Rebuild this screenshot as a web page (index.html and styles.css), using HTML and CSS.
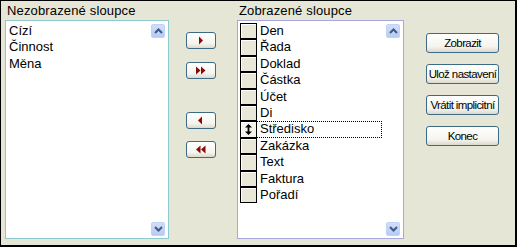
FILE: index.html
```html
<!DOCTYPE html>
<html>
<head>
<meta charset="utf-8">
<link rel="stylesheet" href="styles.css">
</head>
<body>
<div class="window">
  <div class="col col-left">
    <div class="label">Nezobrazené sloupce</div>
    <div class="listbox listbox-teal">
      <div class="items plain">
        <div class="item">Cízí</div>
        <div class="item">Činnost</div>
        <div class="item">Měna</div>
      </div>
      <div class="scrollbar">
        <div class="sbtn"><svg width="9" height="6" viewBox="0 0 9 6"><polyline points="1,5 4.5,1.5 8,5" fill="none" stroke="#3f5a86" stroke-width="2"/></svg></div>
        <div class="sbtn"><svg width="9" height="6" viewBox="0 0 9 6"><polyline points="1,1 4.5,4.5 8,1" fill="none" stroke="#3f5a86" stroke-width="2"/></svg></div>
      </div>
    </div>
  </div>

  <div class="mid">
    <div class="xbtn b1"><svg width="12" height="9" viewBox="0 0 12 9"><polygon points="4,0.5 8,4.5 4,8.5" fill="#8b0a0a"/></svg></div>
    <div class="xbtn b2"><svg width="12" height="9" viewBox="0 0 12 9"><polygon points="1,0.5 5.5,4.5 1,8.5" fill="#8b0a0a"/><polygon points="6,0.5 10.5,4.5 6,8.5" fill="#8b0a0a"/></svg></div>
    <div class="xbtn b3"><svg width="12" height="9" viewBox="0 0 12 9"><polygon points="7,0.5 3,4.5 7,8.5" fill="#8b0a0a"/></svg></div>
    <div class="xbtn b4"><svg width="12" height="9" viewBox="0 0 12 9"><polygon points="5.5,0.5 1,4.5 5.5,8.5" fill="#8b0a0a"/><polygon points="10.5,0.5 6,4.5 10.5,8.5" fill="#8b0a0a"/></svg></div>
  </div>

  <div class="col col-right">
    <div class="label">Zobrazené sloupce</div>
    <div class="listbox listbox-violet">
      <div class="items grid">
        <div class="row"><span class="cell"></span><span class="txt">Den</span></div>
        <div class="row"><span class="cell"></span><span class="txt">Řada</span></div>
        <div class="row"><span class="cell"></span><span class="txt">Doklad</span></div>
        <div class="row"><span class="cell"></span><span class="txt">Částka</span></div>
        <div class="row"><span class="cell"></span><span class="txt">Účet</span></div>
        <div class="row"><span class="cell"></span><span class="txt">Di</span></div>
        <div class="row focus"><span class="cell active"><svg width="7" height="11" viewBox="0 0 7 11"><polygon points="3.5,0 7,3.5 0,3.5" fill="#000"/><rect x="2.6" y="3" width="1.8" height="5" fill="#000"/><polygon points="3.5,11 7,7.5 0,7.5" fill="#000"/></svg></span><span class="txt">Středisko</span></div>
        <div class="row"><span class="cell"></span><span class="txt">Zakázka</span></div>
        <div class="row"><span class="cell"></span><span class="txt">Text</span></div>
        <div class="row"><span class="cell"></span><span class="txt">Faktura</span></div>
        <div class="row"><span class="cell"></span><span class="txt">Pořadí</span></div>
      </div>
      <div class="scrollbar">
        <div class="sbtn"><svg width="9" height="6" viewBox="0 0 9 6"><polyline points="1,5 4.5,1.5 8,5" fill="none" stroke="#3f5a86" stroke-width="2"/></svg></div>
        <div class="sbtn"><svg width="9" height="6" viewBox="0 0 9 6"><polyline points="1,1 4.5,4.5 8,1" fill="none" stroke="#3f5a86" stroke-width="2"/></svg></div>
      </div>
    </div>
  </div>

  <div class="actions">
    <div class="abtn">Zobrazit</div>
    <div class="abtn">Ulož nastavení</div>
    <div class="abtn">Vrátit implicitní</div>
    <div class="abtn">Konec</div>
  </div>
</div>
</body>
</html>
```

FILE: styles.css
```css
html, body {
  margin: 0;
  padding: 0;
  background: #e6e6d6;
}

.window {
  box-sizing: border-box;
  width: 517px;
  height: 247px;
  background: #e6e6d6;
  border-top: 1px solid #000;
  border-left: 1px solid #000;
  border-right: 2px solid #000;
  border-bottom: 2px solid #000;
  display: flex;
  font-family: "Liberation Sans", Arial, sans-serif;
  font-size: 13px;
  color: #000;
}

.col {
  display: flex;
  flex-direction: column;
}

.col-left {
  margin-left: 4px;
  width: 164px;
}

.col-right {
  margin-left: 21px;
  width: 167px;
}

.label {
  height: 19px;
  line-height: 15px;
  padding-top: 2px;
  box-sizing: border-box;
  padding-left: 2px;
  letter-spacing: 0.15px;
}

.listbox {
  box-sizing: border-box;
  height: 219px;
  background: #fff;
  display: flex;
}

.listbox-teal {
  border: 1px solid #8ec9cf;
}

.listbox-violet {
  border: 1px solid #a7a7de;
}

.items {
  flex: 1;
  display: flex;
  flex-direction: column;
}

.items.plain {
  padding: 2px 0 0 3px;
}

.item {
  height: 16.4px;
  line-height: 16px;
}

.items.grid {
  padding: 2px 0 0 2px;
}

.row {
  display: flex;
  align-items: stretch;
  height: 16.4px;
}

.cell {
  box-sizing: border-box;
  width: 17px;
  flex: none;
  background: #e8e7d8;
  border: 1px solid #000;
  box-shadow: inset 1px 1px 0 #fff;
  display: flex;
  align-items: center;
  justify-content: center;
}

.cell.active {
  background: #f4f3ec;
}

.txt {
  padding-left: 3px;
  line-height: 16px;
}

.row.focus {
  outline: 1px dotted #000;
  outline-offset: -1px;
  width: 142px;
}

.scrollbar {
  width: 17px;
  display: flex;
  flex-direction: column;
  justify-content: space-between;
  align-items: flex-start;
  padding: 3px 0 2px 0;
}

.sbtn {
  box-sizing: border-box;
  width: 14px;
  height: 14px;
  border-radius: 2px;
  border: 1px solid #c0d3f7;
  background: linear-gradient(#d1def9, #b6cbf5);
  display: flex;
  align-items: center;
  justify-content: center;
}

.mid {
  margin-left: 17px;
  width: 30px;
  display: flex;
  flex-direction: column;
  padding-top: 31px;
}

.xbtn {
  box-sizing: border-box;
  width: 30px;
  height: 17px;
  border: 1px solid #3d6b86;
  border-radius: 3px;
  background: linear-gradient(#ffffff, #f5f4ee 70%, #dcd8cc);
  display: flex;
  align-items: center;
  justify-content: center;
}

.b2 { margin-top: 13px; }
.b3 { margin-top: 33px; }
.b4 { margin-top: 12px; }

.actions {
  margin-left: 22px;
  width: 73px;
  display: flex;
  flex-direction: column;
  padding-top: 32px;
  gap: 11px;
}

.abtn {
  box-sizing: border-box;
  width: 73px;
  height: 20px;
  border: 1px solid #3d6b86;
  border-radius: 3px;
  background: linear-gradient(#ffffff, #f5f4ee 70%, #dcd8cc);
  display: flex;
  align-items: center;
  justify-content: center;
  font-size: 11.5px;
  letter-spacing: -0.6px;
  white-space: nowrap;
}
```
